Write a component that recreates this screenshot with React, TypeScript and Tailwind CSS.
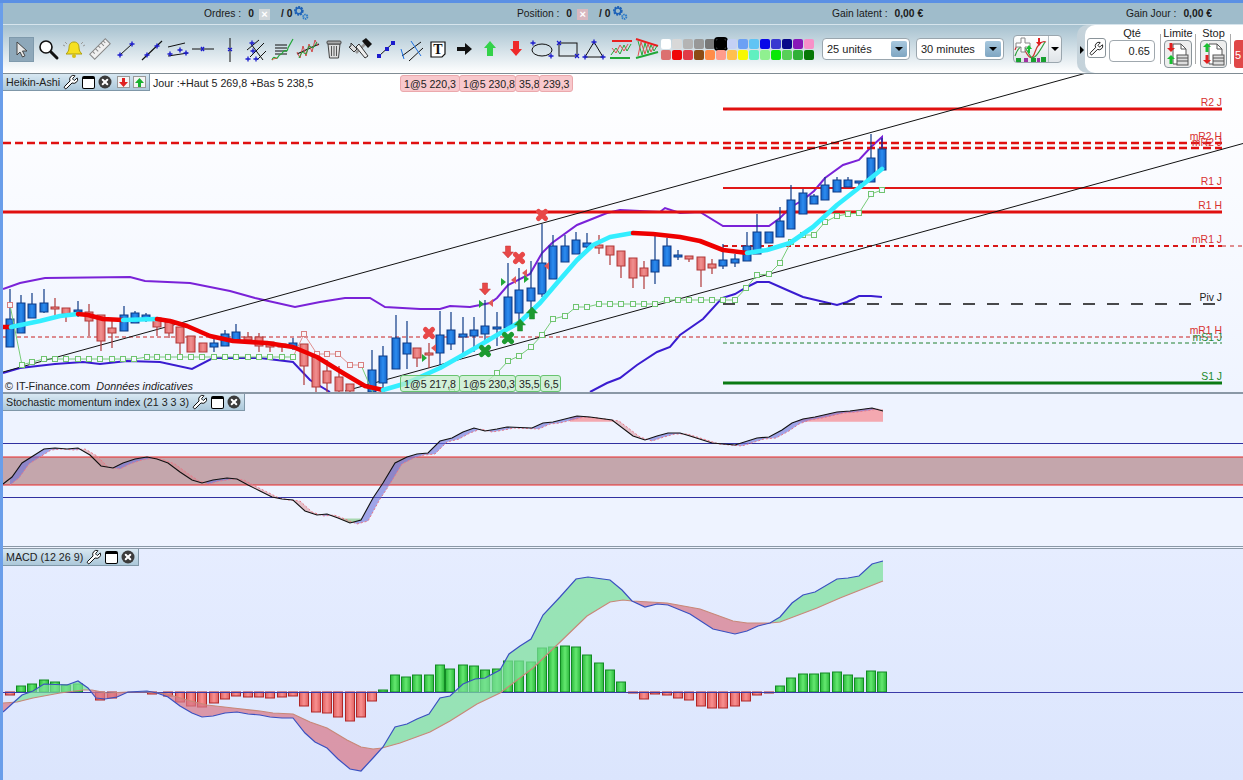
import React from 'react';
import { Wrench } from 'lucide-react';

type P = number[][];
const FONT = "font-['Liberation_Sans',Arial,sans-serif]";

const toStr = (p: P) => p.map((q) => q.join(',')).join(' ');

const interp = (p: P, x: number) => {
  if (x <= p[0][0]) return p[0][1];
  for (let i = 1; i < p.length; i++) {
    if (x <= p[i][0]) {
      const t = (x - p[i - 1][0]) / (p[i][0] - p[i - 1][0]);
      return p[i - 1][1] + t * (p[i][1] - p[i - 1][1]);
    }
  }
  return p[p.length - 1][1];
};

// splits the area between two curves in pieces, by which one is on top
function between(a: P, b: P, x0: number, x1: number) {
  const out: { up: boolean; pts: string }[] = [];
  let top: P = [];
  let bot: P = [];
  let cur: boolean | null = null;
  const flush = () => {
    if (top.length > 1) out.push({ up: !!cur, pts: toStr([...top, ...bot.reverse()]) });
    top = [];
    bot = [];
  };
  for (let x = x0; x <= x1; x++) {
    const ya = interp(a, x);
    const yb = interp(b, x);
    const up = ya < yb;
    if (cur !== null && up !== cur) {
      top.push([x, ya]);
      bot.push([x, yb]);
      flush();
    }
    cur = up;
    top.push([x, ya]);
    bot.push([x, yb]);
  }
  flush();
  return out;
}

// x, high, body top, body bottom, low, colour
const candles: [number, number, number, number, number, 'b' | 'r'][] = [
  [10, 289, 319, 347, 347, 'b'], [21, 295, 303, 333, 333, 'b'], [32, 293, 304, 318, 318, 'b'], [44, 289, 303, 312, 313, 'b'],
  [55, 298, 307, 309, 315, 'r'], [66, 308, 308, 314, 322, 'r'], [78, 301, 310, 312, 317, 'b'], [89, 304, 312, 321, 336, 'r'],
  [101, 315, 315, 341, 351, 'r'], [112, 320, 328, 333, 348, 'r'], [124, 306, 315, 331, 331, 'b'], [135, 311, 313, 323, 323, 'b'],
  [146, 313, 315, 320, 322, 'b'], [157, 318, 318, 327, 336, 'r'], [169, 322, 322, 333, 338, 'r'], [180, 327, 327, 343, 355, 'r'],
  [191, 336, 336, 352, 352, 'r'], [203, 343, 343, 352, 352, 'r'], [214, 338, 343, 347, 352, 'b'], [225, 330, 334, 346, 346, 'b'],
  [236, 324, 332, 340, 340, 'b'], [248, 332, 337, 340, 343, 'r'], [259, 333, 337, 346, 352, 'r'], [270, 342, 342, 347, 352, 'r'],
  [282, 344, 344, 347, 352, 'r'], [293, 338, 343, 347, 350, 'b'], [304, 344, 344, 366, 385, 'r'], [316, 357, 357, 387, 392, 'r'],
  [327, 360, 371, 383, 392, 'r'], [339, 366, 377, 391, 392, 'r'], [350, 384, 384, 391, 392, 'r'], [372, 350, 370, 392, 392, 'b'],
  [383, 346, 356, 383, 392, 'b'], [396, 315, 338, 369, 369, 'b'], [407, 321, 343, 354, 369, 'b'], [417, 348, 348, 358, 367, 'r'],
  [429, 343, 353, 355, 368, 'r'], [440, 311, 335, 353, 365, 'b'], [451, 312, 330, 344, 350, 'b'], [463, 317, 334, 337, 353, 'b'],
  [474, 317, 330, 336, 352, 'b'], [485, 300, 326, 334, 340, 'b'], [497, 312, 327, 329, 346, 'b'], [508, 263, 297, 328, 328, 'b'],
  [519, 268, 290, 313, 322, 'b'], [531, 261, 288, 301, 312, 'b'], [542, 224, 263, 294, 297, 'b'], [553, 235, 246, 279, 279, 'b'],
  [565, 235, 246, 262, 262, 'b'], [576, 232, 240, 254, 254, 'b'], [587, 233, 243, 247, 251, 'b'], [599, 235, 245, 248, 254, 'r'],
  [610, 246, 246, 255, 265, 'r'], [621, 251, 251, 266, 278, 'r'], [633, 258, 258, 278, 288, 'r'], [644, 261, 268, 276, 289, 'r'],
  [655, 232, 260, 272, 284, 'b'], [667, 238, 246, 266, 266, 'b'], [678, 250, 255, 257, 260, 'b'], [689, 256, 256, 259, 262, 'r'],
  [701, 257, 257, 270, 287, 'r'], [712, 259, 264, 268, 274, 'r'], [723, 244, 260, 266, 269, 'b'], [735, 254, 259, 263, 267, 'b'],
  [747, 232, 246, 261, 261, 'b'], [757, 214, 232, 254, 254, 'b'], [769, 232, 232, 243, 243, 'b'], [780, 207, 221, 237, 237, 'b'],
  [791, 185, 200, 229, 229, 'b'], [803, 189, 193, 214, 214, 'b'], [814, 194, 196, 204, 204, 'b'], [825, 177, 185, 200, 200, 'b'],
  [837, 177, 180, 192, 192, 'b'], [848, 177, 180, 187, 187, 'b'], [859, 181, 181, 183, 188, 'b'], [871, 134, 158, 182, 182, 'b'],
  [882, 138, 149, 170, 170, 'b'],
];

const upperBand: P = [[3, 289], [20, 283], [45, 278], [130, 277], [145, 281], [190, 283], [230, 291], [255, 298], [295, 307], [320, 302], [345, 298], [370, 298], [385, 307], [420, 309], [440, 309], [450, 306], [470, 307], [490, 303], [497, 298], [508, 285], [530, 274], [542, 253], [552, 243], [577, 225], [607, 213], [620, 210], [660, 212], [665, 208], [680, 213], [700, 212], [723, 226], [769, 226], [780, 218], [791, 207], [803, 200], [814, 191], [825, 178], [843, 165], [859, 160], [871, 147], [882, 137], [882, 148]];
const lowerBandA: P = [[3, 373], [20, 368], [55, 364], [83, 362], [100, 364], [127, 361], [160, 362], [192, 369], [213, 358], [260, 358], [293, 362], [310, 380], [330, 392]];
const lowerBandB: P = [[590, 392], [607, 383], [620, 378], [637, 365], [657, 352], [670, 347], [680, 335], [703, 319], [722, 298], [735, 294], [747, 287], [757, 282], [769, 282], [787, 290], [803, 297], [837, 305], [847, 302], [859, 296], [871, 296], [882, 297]];

const maSegments: { c: string; p: P }[] = [
  { c: '#ee0000', p: [[3, 327], [11, 327]] },
  { c: '#33eeff', p: [[11, 327], [40, 321], [60, 316], [78, 314]] },
  { c: '#ee0000', p: [[78, 314], [88, 315], [103, 319], [123, 320]] },
  { c: '#33eeff', p: [[123, 320], [157, 319]] },
  { c: '#ee0000', p: [[157, 319], [170, 321], [187, 326], [210, 336], [233, 341], [267, 343], [293, 347], [317, 357], [343, 373], [365, 386], [383, 390]] },
  { c: '#33eeff', p: [[383, 390], [407, 383], [440, 368], [477, 347], [497, 335], [520, 322], [540, 303], [557, 283], [577, 260], [593, 245], [610, 237], [633, 233]] },
  { c: '#ee0000', p: [[633, 233], [653, 234], [680, 237], [700, 241], [723, 250], [747, 253]] },
  { c: '#33eeff', p: [[747, 253], [767, 250], [790, 243], [813, 227], [837, 205], [860, 187], [882, 169]] },
];

const sarGreenA: P = [[22, 365], [32, 362], [44, 359], [55, 359], [66, 359], [78, 359], [89, 359], [100, 359], [112, 359], [123, 359], [134, 359], [147, 357], [157, 357], [168, 357], [180, 357], [191, 357], [202, 357], [214, 357], [225, 357], [236, 357], [248, 357], [259, 357], [270, 357], [282, 357], [293, 357]];
const sarRed: P = [[293, 357], [304, 334], [317, 354], [327, 354], [338, 354], [350, 365], [361, 365]];
const sarGreenB: P = [[361, 365], [373, 393]];
const sarGreenC: P = [[452, 392], [474, 392], [497, 373], [508, 361], [519, 356], [531, 347], [542, 335], [553, 319], [565, 316], [576, 307], [587, 307], [599, 304], [610, 304], [621, 304], [633, 304], [644, 304], [655, 304], [667, 300], [678, 300], [689, 300], [701, 300], [712, 300], [723, 300], [735, 300], [746, 288], [757, 275], [769, 274], [780, 263], [791, 242], [803, 235], [814, 235], [825, 222], [837, 216], [848, 214], [859, 213], [871, 194], [882, 190]];

const stochLine: P = [[3, 484], [12, 477], [22, 463], [33, 456], [44, 449], [55, 448], [67, 449], [78, 448], [90, 455], [101, 466], [113, 468], [123, 463], [135, 459], [147, 457], [157, 459], [168, 463], [180, 472], [192, 480], [202, 483], [213, 480], [227, 478], [237, 479], [248, 485], [260, 491], [272, 497], [282, 499], [293, 500], [305, 511], [317, 515], [327, 514], [338, 518], [350, 523], [361, 520], [373, 498], [383, 483], [395, 463], [407, 457], [417, 454], [428, 453], [440, 441], [452, 438], [463, 432], [474, 428], [485, 431], [497, 429], [507, 427], [532, 428], [543, 423], [553, 422], [577, 416], [590, 417], [612, 420], [633, 436], [645, 440], [657, 436], [668, 433], [680, 433], [690, 436], [712, 443], [735, 445], [757, 438], [769, 437], [782, 430], [792, 423], [803, 419], [815, 417], [837, 412], [850, 411], [872, 408], [883, 411]];
const stochSignal: P = stochLine.map(([x, y]) => [x + 7, y + 1]).filter(([x]) => x <= 883);

const macdLine: P = [[3, 712], [13, 703], [22, 695], [33, 691], [44, 684], [67, 685], [78, 681], [88, 688], [96, 698], [105, 699], [117, 697], [128, 692], [147, 691], [157, 693], [168, 697], [180, 706], [192, 713], [202, 717], [213, 716], [225, 713], [237, 712], [248, 714], [260, 715], [270, 717], [282, 718], [293, 718], [305, 733], [315, 742], [327, 748], [338, 759], [350, 769], [361, 771], [373, 758], [383, 747], [395, 727], [407, 724], [417, 719], [429, 714], [440, 698], [450, 696], [463, 684], [475, 679], [485, 678], [500, 670], [509, 654], [520, 646], [531, 639], [543, 615], [560, 597], [576, 579], [588, 577], [610, 580], [622, 590], [632, 601], [645, 607], [657, 604], [668, 605], [690, 614], [713, 629], [735, 634], [747, 631], [758, 626], [770, 623], [780, 617], [792, 603], [803, 595], [815, 592], [837, 579], [848, 578], [859, 576], [872, 564], [883, 561]];
const macdSignal: P = [[3, 703], [17, 702], [33, 698], [60, 693], [83, 690], [92, 690], [107, 693], [128, 692], [147, 692], [167, 694], [187, 700], [207, 705], [233, 708], [260, 711], [273, 713], [293, 714], [310, 722], [327, 728], [347, 740], [361, 747], [373, 749], [382, 748], [400, 743], [430, 732], [450, 721], [477, 704], [500, 693], [533, 668], [557, 645], [587, 616], [610, 602], [623, 600], [632, 601], [667, 603], [700, 609], [733, 621], [747, 623], [770, 623], [780, 622], [817, 608], [840, 598], [883, 581]];

// x, height: positive goes up (green), negative goes down (red)
const macdBars: number[][] = [[10, -3], [21, 6], [32, 8], [44, 12], [55, 10], [66, 7], [78, 8], [100, -8], [112, -6], [152, -2], [168, -4], [180, -10], [191, -14], [202, -15], [214, -11], [225, -7], [236, -4], [248, -5], [259, -5], [270, -6], [282, -5], [293, -4], [304, -14], [316, -20], [327, -21], [338, -25], [350, -29], [361, -25], [372, -9], [383, 2], [395, 17], [406, 15], [417, 17], [429, 17], [440, 27], [450, 23], [463, 27], [474, 26], [485, 22], [497, 23], [508, 31], [519, 31], [531, 30], [542, 44], [553, 45], [565, 46], [576, 45], [587, 37], [599, 29], [610, 22], [621, 10], [633, -1], [644, -7], [655, -2], [667, -3], [678, -6], [689, -8], [701, -14], [712, -16], [723, -16], [735, -14], [746, -9], [757, -3], [769, -1], [780, 6], [791, 14], [803, 18], [814, 18], [825, 19], [837, 20], [848, 17], [859, 14], [871, 21], [882, 20]];

const levels = [
  { y: 109, x0: 723, w: 3, c: '#e01010', label: 'R2 J' },
  { y: 143, x0: 3, w: 2.4, c: '#e01010', dash: '8 4', label: 'mR2 H', ly: 140 },
  { y: 148, x0: 723, w: 2.4, c: '#e01010', dash: '8 4', label: 'mR2 J', ly: 146 },
  { y: 188, x0: 723, w: 2, c: '#e01818', label: 'R1 J' },
  { y: 212, x0: 3, w: 3, c: '#e01010', label: 'R1 H' },
  { y: 246, x0: 723, w: 2, c: '#d81818', dash: '5 4', label: 'mR1 J' },
  { y: 337, x0: 3, w: 1, c: '#c82020', dash: '4 3', label: 'mR1 H' },
  { y: 343, x0: 723, w: 1, c: '#208030', dash: '4 3', label: 'mS1 J', ly: 341, lc: '#2a8a3a' },
  { y: 304, x0: 723, w: 1.5, c: '#101010', dash: '12 12', label: 'Piv J', lc: '#222' },
  { y: 383, x0: 723, w: 3, c: '#0a7a14', label: 'S1 J', lc: '#1a8a2a' },
];

function Candle({ x, hi, top, bot, lo, kind }: { x: number; hi: number; top: number; bot: number; lo: number; kind: 'b' | 'r' }) {
  const edge = kind === 'b' ? '#0c3a86' : '#b03838';
  return (
    <g>
      <line x1={x} x2={x} y1={hi} y2={lo} stroke={edge} strokeWidth={1.2} />
      <rect x={x - 4} y={top} width={8} height={Math.max(bot - top, 1.5)} fill={kind === 'b' ? 'url(#cb)' : 'url(#cr)'} stroke={edge} strokeWidth={1} />
    </g>
  );
}

function Cross({ x, y, c }: { x: number; y: number; c: string }) {
  return <path d={`M${x - 3.5} ${y - 3.5}L${x + 3.5} ${y + 3.5}M${x + 3.5} ${y - 3.5}L${x - 3.5} ${y + 3.5}`} stroke={c} strokeWidth={5} strokeLinecap="round" />;
}

function Arrow({ x, y, c, down }: { x: number; y: number; c: string; down?: boolean }) {
  const s = down ? 1 : -1;
  return <path d={`M${x - 2.5} ${y - 6 * s}h5v${6 * s}h3l-5.5 ${6 * s}l-5.5 ${-6 * s}h3z`} fill={c} stroke={down ? '#c03030' : '#148a24'} strokeWidth={0.5} />;
}

function Tri({ x, y, c, left }: { x: number; y: number; c: string; left?: boolean }) {
  return <path d={left ? `M${x + 2} ${y - 4}v8l-5 -4z` : `M${x - 2} ${y - 4}v8l5 -4z`} fill={c} />;
}

function MainChart() {
  return (
    <svg viewBox="3 74 1240 318" className={`block w-[1240px] h-[318px] ${FONT}`}>
      <defs>
        <linearGradient id="cb" x1="0" x2="1" y1="0" y2="0">
          <stop offset="0" stopColor="#1464c8" />
          <stop offset="0.5" stopColor="#2c8cf0" />
          <stop offset="1" stopColor="#1464c8" />
        </linearGradient>
        <linearGradient id="cr" x1="0" x2="1" y1="0" y2="0">
          <stop offset="0" stopColor="#e06868" />
          <stop offset="0.5" stopColor="#f09090" />
          <stop offset="1" stopColor="#e06868" />
        </linearGradient>
      </defs>
      <polyline points={toStr(upperBand)} fill="none" stroke="#7a22d8" strokeWidth={2} />
      <polyline points={toStr(lowerBandA)} fill="none" stroke="#3a1cd0" strokeWidth={2} />
      <polyline points={toStr(lowerBandB)} fill="none" stroke="#3a1cd0" strokeWidth={2} />
      {levels.map((l) => (
        <g key={l.label}>
          <line x1={l.x0} x2={1222} y1={l.y} y2={l.y} stroke={l.c} strokeWidth={l.w} strokeDasharray={l.dash} />
          <text x={1222} y={(l.ly ?? l.y - 3)} textAnchor="end" fontSize={10.4} fill={l.lc ?? '#d83030'}>{l.label}</text>
        </g>
      ))}
      <line x1={1222} x2={1243} y1={246} y2={246} stroke="#c82020" strokeWidth={1} strokeDasharray="4 4" />
      <line x1={3} x2={1090} y1={372} y2={72} stroke="#111" strokeWidth={1} />
      <line x1={345} x2={1243} y1={391} y2={143.5} stroke="#111" strokeWidth={1} />
      {candles.map((c) => (
        <Candle key={c[0]} x={c[0]} hi={c[1]} top={c[2]} bot={c[3]} lo={c[4]} kind={c[5]} />
      ))}
      <polyline points="10,305 22,365" fill="none" stroke="#78cc78" strokeWidth={1} />
      <polyline points={toStr(sarGreenA)} fill="none" stroke="#78cc78" strokeWidth={1} />
      <polyline points={toStr(sarRed)} fill="none" stroke="#e09090" strokeWidth={1} />
      <polyline points={toStr(sarGreenB)} fill="none" stroke="#78cc78" strokeWidth={1} />
      <polyline points={toStr(sarGreenC)} fill="none" stroke="#78cc78" strokeWidth={1} />
      {sarGreenA.concat(sarGreenC).map(([x, y]) => (
        <rect key={`${x}-${y}`} x={x - 2.5} y={y - 2.5} width={5} height={5} fill="#f4f8ff" stroke="#70c470" strokeWidth={1} />
      ))}
      {[[10, 305], ...sarRed.slice(1)].map(([x, y]) => (
        <rect key={`${x}-${y}`} x={x - 2.5} y={y - 2.5} width={5} height={5} fill="#f8f4f8" stroke="#d88080" strokeWidth={1} />
      ))}
      {maSegments.map((s, i) => (
        <polyline key={i} points={toStr(s.p)} fill="none" stroke={s.c} strokeWidth={4.6} strokeLinecap="round" strokeLinejoin="round" />
      ))}
      <Cross x={542} y={215} c="#e84848" />
      <Cross x={519} y={258} c="#e84848" />
      <Cross x={429} y={333} c="#e84848" />
      <Cross x={508} y={338} c="#1c9a30" />
      <Cross x={485} y={351} c="#1c9a30" />
      <Arrow x={508} y={252} c="#e84848" down />
      <Arrow x={485} y={289} c="#e84848" down />
      <Arrow x={520} y={325} c="#1c9a30" />
      <Arrow x={532} y={313} c="#1c9a30" />
      <Tri x={503} y={282} c="#22a838" />
      <Tri x={481} y={304} c="#22a838" />
      <Tri x={424} y={358} c="#22a838" />
      <Tri x={526} y={279} c="#22a838" />
      <Tri x={491} y={303} c="#e05858" left />
      <Tri x={434} y={348} c="#e05858" left />
      <Tri x={547} y={266} c="#e05858" left />
      <Tri x={525} y={273} c="#e05858" left />
      <Tri x={514} y={280} c="#e05858" left />
    </svg>
  );
}

function StochChart() {
  const pieces = between(stochLine, stochSignal, 10, 883);
  const high = between(stochLine, [[0, 421.7], [1243, 421.7]], 570, 883).filter((p) => p.up);
  const low = between(stochLine, [[0, 518.5], [1243, 518.5]], 330, 370).filter((p) => !p.up);
  return (
    <svg viewBox="3 394 1240 152" className="block w-[1240px] h-[152px]">
      <rect x={3} y={457} width={1240} height={28} fill="#c4a6ac" />
      <line x1={3} x2={1243} y1={443.5} y2={443.5} stroke="#3030a0" strokeWidth={1} />
      <line x1={3} x2={1243} y1={497.5} y2={497.5} stroke="#3030a0" strokeWidth={1} />
      <line x1={3} x2={1243} y1={457} y2={457} stroke="#e82828" strokeWidth={1.2} />
      <line x1={3} x2={1243} y1={485} y2={485} stroke="#e82828" strokeWidth={1.2} />
      {high.map((p, i) => <polygon key={i} points={p.pts} fill="#f4a8b0" />)}
      {low.map((p, i) => <polygon key={i} points={p.pts} fill="#a8d8b0" />)}
      {pieces.map((p, i) => (
        <polygon key={i} points={p.pts} fill={p.up ? '#6a70d8' : '#d88088'} fillOpacity={p.up ? 0.6 : 0.45} />
      ))}
      <polyline points={toStr(stochSignal)} fill="none" stroke="#e87888" strokeWidth={1} strokeDasharray="2 2" />
      <polyline points={toStr(stochLine)} fill="none" stroke="#111" strokeWidth={1.1} />
    </svg>
  );
}

function MacdChart() {
  const pieces = between(macdLine, macdSignal, 3, 883);
  return (
    <svg viewBox="3 549 1240 231" className="block w-[1240px] h-[231px]">
      <defs>
        <linearGradient id="bg" x1="0" x2="1" y1="0" y2="0">
          <stop offset="0" stopColor="#2cb83c" />
          <stop offset="0.5" stopColor="#64e870" />
          <stop offset="1" stopColor="#2cb83c" />
        </linearGradient>
        <linearGradient id="br" x1="0" x2="1" y1="0" y2="0">
          <stop offset="0" stopColor="#e06060" />
          <stop offset="0.5" stopColor="#f89090" />
          <stop offset="1" stopColor="#e06060" />
        </linearGradient>
      </defs>
      {macdBars.map(([x, h]) => (
        <rect
          key={x}
          x={x - 4.5}
          y={h > 0 ? 692 - h : 692}
          width={9}
          height={Math.abs(h)}
          fill={h > 0 ? 'url(#bg)' : 'url(#br)'}
          stroke={h > 0 ? '#128a24' : '#b02828'}
          strokeWidth={1}
        />
      ))}
      <line x1={3} x2={1243} y1={692.5} y2={692.5} stroke="#3a3aa8" strokeWidth={1.2} />
      {pieces.map((p, i) => (
        <polygon key={i} points={p.pts} fill={p.up ? '#7ce09a' : '#d87888'} fillOpacity={0.72} />
      ))}
      <polyline points={toStr(macdSignal)} fill="none" stroke="#c88878" strokeWidth={1.2} />
      <polyline points={toStr(macdLine)} fill="none" stroke="#3a50c0" strokeWidth={1.2} />
    </svg>
  );
}

function WindowIcon() {
  return <span className="block h-[13px] w-[13px] shrink-0 rounded-[2px] border border-t-[3px] border-black bg-white" />;
}

function CloseIcon() {
  return (
    <svg width="14" height="14" viewBox="0 0 14 14" className="shrink-0">
      <circle cx="7" cy="7" r="6.5" fill="#3c3c3c" />
      <path d="M4.7 4.7l4.6 4.6M9.3 4.7l-4.6 4.6" stroke="#fff" strokeWidth="2" strokeLinecap="round" />
    </svg>
  );
}

function Legend({ label, extra }: { label: string; extra?: boolean }) {
  return (
    <div className="absolute left-0 top-0 flex h-[17px] items-center gap-[3px] border-r border-b border-[#7f97a8] bg-gradient-to-b from-[#d8e8f2] to-[#acc8da] pl-[3px] pr-[3px] text-[10.7px] text-[#222]">
      <span className="whitespace-nowrap">{label}</span>
      <Wrench size={16} strokeWidth={1.4} fill="#fff" className="shrink-0 text-black" />
      <WindowIcon />
      <CloseIcon />
      {extra && (
        <>
          <span className="ml-[2px] flex h-[12px] w-[13px] shrink-0 items-center justify-center border border-[#999] bg-[#f4f4f4]">
            <svg width="9" height="9" viewBox="0 0 9 9"><path d="M3 0h3v4h3l-4.5 5L0 4h3z" fill="#e02020" /></svg>
          </span>
          <span className="flex h-[12px] w-[13px] shrink-0 items-center justify-center border border-[#999] bg-[#f4f4f4]">
            <svg width="9" height="9" viewBox="0 0 9 9"><path d="M3 9h3V5h3L4.5 0 0 5h3z" fill="#18b030" /></svg>
          </span>
        </>
      )}
    </div>
  );
}

function Gears() {
  return (
    <svg width="16" height="16" viewBox="0 0 15 15">
      <circle cx="5.5" cy="5.5" r="3.4" fill="none" stroke="#1d62b8" strokeWidth="2.2" strokeDasharray="1.7 0.8" />
      <circle cx="5.5" cy="5.5" r="2.8" fill="none" stroke="#1d62b8" strokeWidth="1.4" />
      <circle cx="11.5" cy="11" r="2" fill="none" stroke="#2c7ac8" strokeWidth="1.8" strokeDasharray="1.3 0.6" />
    </svg>
  );
}

function Status({ w, label, value, cross }: { w: string; label: string; value?: string; cross?: string }) {
  return (
    <div className={`flex shrink-0 items-center ${w}`}>
      <span>{label}</span>
      {value && <b className="ml-[7px]">{value}</b>}
      {cross && (
        <>
          <span className={`ml-[5px] flex h-[11px] w-[11px] items-center justify-center ${cross} text-[11px] font-bold leading-none text-white`}>×</span>
          <b className="ml-[11px]">/ 0</b>
          <span className="-mt-[3px] ml-[1px]"><Gears /></span>
        </>
      )}
    </div>
  );
}

const B = '#1c1ccc';
const plus = (x: number, y: number, r = 2.5) => `M${x - r} ${y}h${2 * r}M${x} ${y - r}v${2 * r}`;

const tools: React.ReactNode[] = [
  <g key="zoom"><circle cx="11" cy="11" r="6" fill="#fff" stroke="#111" strokeWidth="1.6" /><path d="M16 16l6 6" stroke="#111" strokeWidth="3" strokeLinecap="round" /></g>,
  <g key="bell"><path d="M13 6c-4 0-5 3-5 6 0 3-2 5-3 6h16c-1-1-3-3-3-6 0-3-1-6-5-6z" fill="#f6e020" stroke="#b0a010" strokeWidth="1" /><circle cx="13" cy="20" r="2" fill="#d8c010" /><path d="M4 6l2 2M22 6l-2 2M2 9l2 1M24 9l-2 1" stroke="#999" strokeWidth="1" /></g>,
  <g key="ruler" transform="rotate(-45 13 13)"><rect x="2" y="9.5" width="22" height="7" fill="#f0f0f0" stroke="#888" /><path d="M6 9.5v3M10 9.5v4M14 9.5v3M18 9.5v4M21 9.5v3" stroke="#888" /></g>,
  <g key="seg"><path d="M7 19L19 8" stroke="#111" /><path d={plus(7, 19) + plus(19, 8)} stroke={B} strokeWidth="1.4" /></g>,
  <g key="line"><path d="M3 24L23 5" stroke="#111" strokeWidth="1.2" /><path d={plus(8, 19) + plus(18, 10)} stroke={B} strokeWidth="1.4" /></g>,
  <g key="chan"><path d="M3 11l17-4M3 20l20-3" stroke="#111" /><path d={plus(5, 18) + plus(15, 14) + plus(21, 17)} stroke={B} strokeWidth="1.4" /></g>,
  <g key="h"><path d="M1 13h22" stroke="#111" /><path d="M10 11l3 4M13 11l-3 4" stroke={B} strokeWidth="1.3" /></g>,
  <g key="v"><path d="M13 2v24" stroke="#111" /><path d="M11 12l4 3M15 12l-4 3" stroke={B} strokeWidth="1.3" /></g>,
  <g key="fork"><path d="M4 14l12-10M7 21l14-14M14 24l9-9M8 8l12 16" stroke="#111" /><path d={plus(9, 7) + plus(5, 23) + plus(13, 23) + plus(10, 15)} stroke={B} strokeWidth="1.3" /></g>,
  <g key="txt"><path d="M6 9h12M6 12h12M6 15h12M6 18h12" stroke="#111" strokeWidth="1.2" /><path d="M3 24c2-6 4 1 6-3s3-1 5-5 4 2 5-4l5-9" fill="none" stroke="#22a838" strokeWidth="1.2" /><path d="M3 24c2-2 3-1 5-2" fill="none" stroke="#e05030" /></g>,
  <g key="wave"><path d="M2 18L24 8" stroke="#111" strokeWidth="1.2" /><path d="M2 16l3 6 3-12 3 10 3-12 3 8 3-12 3 6" fill="none" stroke="#d04848" strokeWidth="1" /><path d="M4 22l3-6 4 2 3-8 4 2 4-6" fill="none" stroke="#22a838" strokeWidth="1" /></g>,
  <g key="trash"><path d="M7 8h12l-1.5 14h-9z" fill="#ddd" stroke="#444" /><rect x="6" y="5" width="14" height="3" rx="1" fill="#aaa" stroke="#444" /><path d="M10.5 10v10M13 10v10M15.5 10v10" stroke="#555" /></g>,
  <g key="tools"><path d="M4 7l6 6-3 3-5-5 2-1z" fill="#ddd" stroke="#333" /><path d="M9 17l10-10" stroke="#999" strokeWidth="2.6" /><path d="M15 5l4-3 6 6-4 4z" fill="#111" /><path d="M9 11l9 11 3-2-9-12z" fill="#eee" stroke="#333" /></g>,
  <g key="dots"><path d="M6 20L20 7" stroke="#111" /><rect x="4" y="18" width="4" height="4" fill={B} /><rect x="12" y="11" width="4" height="4" fill={B} /><rect x="18" y="5" width="4" height="4" fill={B} /></g>,
  <g key="cross"><path d="M3 20L22 6M10 25L24 12" stroke="#111" /><path d="M2 13l3 10M12 5l10 15" stroke="#1c70e0" /></g>,
  <g key="t"><path d="M6 6h14v12l-3 3H6z" fill="#fff" stroke="#111" strokeWidth="1.2" /><text x="13" y="18" textAnchor="middle" fontSize="14" fontWeight="bold" fontFamily="Liberation Serif, serif" fill="#111">T</text></g>,
  <path key="right" d="M6 11h8V7l7 6-7 6v-4H6z" fill="#111" />,
  <path key="up" d="M10 20v-8H7l6-7 6 7h-3v8z" fill="#33d24a" />,
  <path key="down" d="M10 5h6v8h3l-6 7-6-7h3z" fill="#ee2a2a" />,
  <g key="ell"><ellipse cx="13" cy="14" rx="10" ry="6" fill="none" stroke="#111" /><path d={plus(4, 7) + plus(22, 20)} stroke={B} strokeWidth="1.3" /></g>,
  <g key="rect"><rect x="4" y="7" width="18" height="13" fill="none" stroke="#111" /><path d="M2 5l4 4M6 5l-4 4M20 18l4 4M24 18l-4 4" stroke={B} strokeWidth="1.2" /></g>,
  <g key="tri"><path d="M13 6L4 21h18z" fill="none" stroke="#111" /><path d={plus(13, 6) + plus(4, 21) + plus(22, 21)} stroke={B} strokeWidth="1.3" /></g>,
  <g key="band"><path d="M5 5h20" stroke="#e82020" strokeWidth="2" /><path d="M3 22h20" stroke="#22a838" strokeWidth="2" /><path d="M4 19l5-7 4 6 4-9 3 6 4-7" fill="none" stroke="#22a838" /><path d="M5 12l4 5 4-8 4 6 4-7" fill="none" stroke="#e05050" /></g>,
  <g key="wedge"><path d="M3 3l22 7" stroke="#e82020" strokeWidth="2" /><path d="M3 22l22-6" stroke="#22a838" strokeWidth="2" /><path d="M5 5l4 14 3-12 3 10 3-8 3 6 3-5" fill="none" stroke="#22a838" /><path d="M5 20l3-14 4 12 3-10 3 8 3-6" fill="none" stroke="#e05050" /></g>,
];

const paletteTop = ['#ffffff', '#d8d8d8', '#b4b4b4', '#989898', '#787878', '#000000', '#c4d0f4', '#6ca0f4', '#60c4f4', '#0808e8', '#3838d0', '#080888', '#8818b8', '#f890c8'];
const paletteBottom = ['#dc7070', '#f00808', '#e03c48', '#8c4c14', '#ff8c48', '#ff9c8c', '#ffc050', '#f8f800', '#60f0c0', '#90f090', '#08e808', '#58d058', '#30b038', '#087808'];

function Palette() {
  return (
    <div className="ml-[2px] flex shrink-0 flex-col gap-px">
      {[paletteTop, paletteBottom].map((row, r) => (
        <div key={r} className="flex gap-px">
          {row.map((c, i) => (
            <span
              key={i}
              className={`block h-[10px] w-[10px] rounded-[2px] ${c === '#000000' ? 'outline-2 outline-black' : ''}`}
              style={{ background: c }}
            />
          ))}
        </div>
      ))}
    </div>
  );
}

function DropBox({ label }: { label: string }) {
  return (
    <div className="flex h-[22px] w-[88px] shrink-0 items-center justify-between rounded-[4px] border border-[#9aa6ae] bg-white pl-[4px] pr-[2px] text-[11px] text-[#222]">
      <span>{label}</span>
      <span className="flex h-[16px] w-[16px] items-center justify-center rounded-[2px] bg-gradient-to-b from-[#a8c8de] to-[#7fa6c2]">
        <span className="border-x-[4px] border-t-[4px] border-x-transparent border-t-black" />
      </span>
    </div>
  );
}

function OrderIcon({ flip }: { flip?: boolean }) {
  const first = flip ? '#18c030' : '#e02020';
  const second = flip ? '#e02020' : '#18c030';
  return (
    <svg width="24" height="24" viewBox="0 0 24 24">
      <path d="M7 2h8l5 5v15H7z" fill="#fff" stroke="#555" />
      <path d="M15 2v5h5" fill="none" stroke="#555" />
      <rect x="11" y="13" width="11" height="10" fill="#ddd" stroke="#555" />
      <path d="M11 16h11M11 19h11" stroke="#555" />
      <path d={flip ? 'M3.5 10V5H1l4-4 4 4H6.5v5z' : 'M3.5 1v5H1l4 4 4-4H6.5V1z'} fill={first} />
      <path d={flip ? 'M3.5 13v5H1l4 4 4-4H6.5v-5z' : 'M3.5 22v-5H1l4-4 4 4H6.5v5z'} fill={second} />
    </svg>
  );
}

function Toolbar() {
  return (
    <div className="flex h-[49px] shrink-0 items-center border-b border-[#808c94] bg-gradient-to-b from-[#a6c1cf] to-white pl-[6px]">
      <div className="flex h-[25px] w-[25px] shrink-0 items-center justify-center border border-[#7f9aac] bg-[#8ea8ba]">
        <svg width="13" height="17" viewBox="0 0 13 17"><path d="M2 1v13l3-3 2.5 5 2.4-1.2L7.5 10H12z" fill="#e8e8e8" stroke="#444" /></svg>
      </div>
      <div className="ml-[1px] flex shrink-0">
        {tools.map((t, i) => (
          <svg key={i} width="26" height="26" viewBox="0 0 26 26" className="shrink-0">{t}</svg>
        ))}
      </div>
      <Palette />
      <div className="ml-[8px] shrink-0"><DropBox label="25 unités" /></div>
      <div className="ml-[6px] shrink-0"><DropBox label="30 minutes" /></div>
      <div className="ml-[9px] flex h-[28px] w-[49px] shrink-0 items-stretch overflow-hidden rounded-[4px] border border-[#9aa6ae] bg-gradient-to-b from-white to-[#dfe4e8]">
        <svg width="34" height="26" viewBox="0 0 34 26" className="shrink-0">
          <path d="M1 14c4-12 8-2 12 4s6 4 8-2 6-12 11-10" fill="none" stroke="#cc3030" strokeWidth="1.2" />
          <path d="M1 20c5-14 10-10 14-2s8 2 16-12" fill="none" stroke="#30a040" strokeWidth="1.2" />
          <path d="M2 7h5V2h4v5h5v4h-5v5H7v-5H2z" fill="#fff" stroke="#888" />
          <path d="M14 17v-4h-2l3-4 3 4h-2v4z" fill="#18c030" />
          <path d="M24 2v4h-2l3 4 3-4h-2V2z" fill="#e02020" />
          <path d="M2 22h5v4H2zM17 22h5v4h-5zM27 21h5v5h-5z" fill="#18a030" />
          <path d="M10 22h4v4h-4zM23 22h3v4h-3z" fill="#a030a0" />
        </svg>
        <span className="flex flex-1 items-center justify-center border-l border-[#b4bcc2]">
          <span className="border-x-[4px] border-t-[4px] border-x-transparent border-t-black" />
        </span>
      </div>
      <div className="ml-[15px] flex h-[48px] min-w-0 flex-1 rounded-l-[10px] bg-gradient-to-r from-[#c4d2da] to-[#dfe6ea] pl-[8px]">
        <div className="flex min-w-0 flex-1 items-start rounded-l-[10px] bg-white text-[11px] text-[#222]">
          <span className="-ml-[5px] mt-[21px] shrink-0 border-y-[4px] border-l-[4px] border-y-transparent border-l-black" />
          <span className="ml-[3px] mt-[13px] flex h-[20px] w-[19px] shrink-0 items-center justify-center rounded-[3px] border border-[#8a949a]">
            <Wrench size={15} strokeWidth={1.4} fill="#fff" className="text-black" />
          </span>
          <div className="ml-[3px] flex w-[46px] shrink-0 flex-col items-center">
            <span className="mt-[1px] h-[14px] leading-[14px]">Qté</span>
            <span className="flex h-[22px] w-[46px] items-center justify-end rounded-[4px] border border-[#a0a8ae] pr-[4px]">0.65</span>
          </div>
          <span className="ml-[5px] mt-[9px] h-[30px] w-px shrink-0 bg-[#aaa]" />
          <div className="ml-[2px] flex w-[30px] shrink-0 flex-col items-center">
            <span className="mt-[1px] h-[14px] leading-[14px]">Limite</span>
            <span className="flex h-[28px] w-[28px] items-center justify-center rounded-[4px] border border-[#8a949a] bg-[#eee]"><OrderIcon /></span>
          </div>
          <span className="ml-[2px] mt-[9px] h-[30px] w-px shrink-0 bg-[#aaa]" />
          <div className="ml-[4px] flex w-[27px] shrink-0 flex-col items-center">
            <span className="mt-[1px] h-[14px] leading-[14px]">Stop</span>
            <span className="flex h-[28px] w-[27px] items-center justify-center rounded-[4px] border border-[#8a949a] bg-[#eee]"><OrderIcon flip /></span>
          </div>
          <span className="ml-[3px] mt-[9px] h-[30px] w-px shrink-0 bg-[#aaa]" />
          <span className="ml-[3px] mt-[15px] flex h-[28px] flex-1 items-end rounded-l-[3px] bg-[#e04848] pl-[1px] pb-[5px] text-white">5</span>
        </div>
      </div>
    </div>
  );
}

function Tags({ tone, items }: { tone: string; items: { l: number; w: number; t: string }[] }) {
  return (
    <>
      {items.map((it) => (
        <span
          key={it.l}
          className={`absolute top-0 h-[17px] overflow-hidden whitespace-nowrap rounded-[3px] border pl-[3px] text-[10.6px] leading-[16px] text-[#222] ${tone}`}
          style={{ left: it.l, width: it.w }}
        >
          {it.t}
        </span>
      ))}
    </>
  );
}

export default function App() {
  return (
    <div className={`flex h-[780px] w-[1243px] flex-col overflow-hidden bg-[#5b90e4] ${FONT}`}>
      <div className="h-[3px] shrink-0" />
      <div className="flex min-h-0 flex-1">
        <div className="w-[3px] shrink-0 bg-[#6a9eea]" />
        <div className="flex w-[1240px] flex-col">
          <div className="flex h-[22px] shrink-0 items-center border-b border-[#d6e4ec] bg-[#9fbccb] pl-[201px] pt-[1px] text-[10.3px] text-[#1a1a1a]">
            <Status w="w-[313px]" label="Ordres :" value="0" cross="bg-[#cfd6da]" />
            <Status w="w-[315px]" label="Position :" value="0" cross="bg-[#d8b8c0]" />
            <Status w="w-[294px]" label="Gain latent :" value="0,00 €" />
            <Status w="w-[100px]" label="Gain Jour :" value="0,00 €" />
          </div>
          <Toolbar />

          <div className="relative h-[318px] shrink-0 overflow-hidden bg-gradient-to-b from-white to-[#eff4ff]">
            <MainChart />
            <Legend label="Heikin-Ashi" extra />
            <span className="absolute left-[150px] top-[1px] whitespace-nowrap text-[10.7px] text-[#222]">Jour :+Haut 5 269,8 +Bas 5 238,5</span>
            <div className="absolute left-0 top-px h-[17px] w-full">
              <Tags
                tone="border-[#eba8ac] bg-[#f8c8cc]"
                items={[
                  { l: 397, w: 60, t: '1@5 220,3' },
                  { l: 456, w: 57, t: '1@5 230,8' },
                  { l: 512, w: 25, t: '35,8' },
                  { l: 536, w: 34, t: '239,3' },
                ]}
              />
            </div>
            <div className="absolute left-0 top-[301px] h-[17px] w-full">
              <Tags
                tone="border-[#68c470] bg-[#c4eec8]/70"
                items={[
                  { l: 397, w: 60, t: '1@5 217,8' },
                  { l: 456, w: 57, t: '1@5 230,3' },
                  { l: 512, w: 26, t: '35,5' },
                  { l: 537, w: 21, t: '6,5' },
                ]}
              />
            </div>
            <span className="absolute left-[2px] top-[304px] whitespace-nowrap text-[10.8px] text-[#222]">
              © IT-Finance.com <i className="ml-[3px]">Données indicatives</i>
            </span>
          </div>

          <div className="h-[2px] shrink-0 border-y border-[#8a98a6]" />

          <div className="relative h-[152px] shrink-0 bg-[#eef3ff]">
            <StochChart />
            <Legend label="Stochastic momentum index (21 3 3 3)" />
          </div>

          <div className="h-[3px] shrink-0 border-y border-[#8a98a6] bg-[#eef3ff]" />

          <div className="relative min-h-0 flex-1 bg-gradient-to-b from-[#e6edff] to-[#dbe5fd]">
            <MacdChart />
            <Legend label="MACD (12 26 9)" />
          </div>
        </div>
      </div>
    </div>
  );
}
